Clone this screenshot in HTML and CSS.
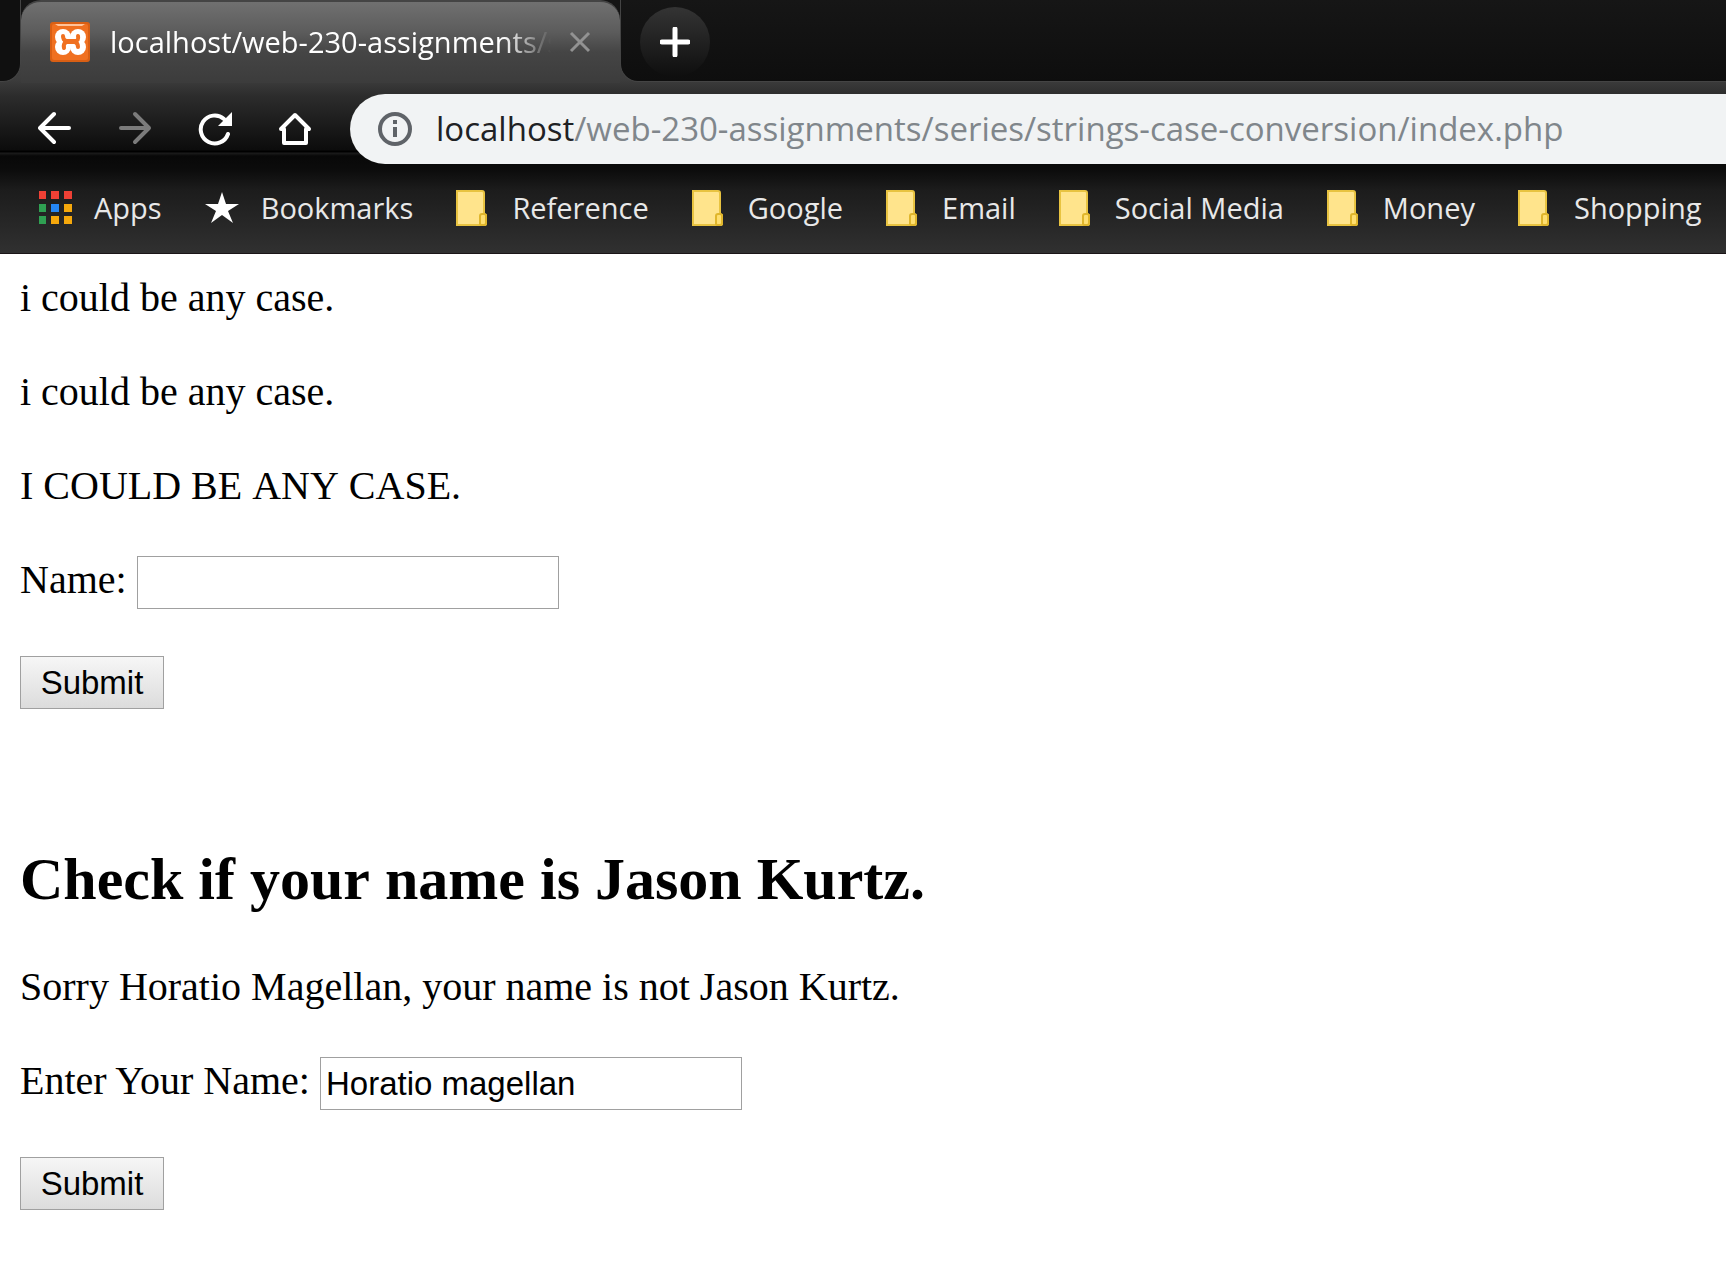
FILE: index.html
```html
<!DOCTYPE html>
<html lang="en">
<head>
<meta charset="utf-8">
<title>localhost/web-230-assignments/series/strings-case-conversion/index.php</title>
<link rel="stylesheet" href="styles.css">
</head>
<body>
<header class="chrome">
  <div class="tabstrip">
    <div class="strip-left"></div>
    <div class="tab">
      <svg class="favicon" viewBox="0 0 40 40" aria-hidden="true">
        <rect width="40" height="40" rx="3" fill="#d95f14"/>
        <rect x="2" y="2" width="36" height="36" rx="2" fill="#f07020"/>
        <path d="M5 2h30l-3 2H8z" fill="#ffc39a"/>
        <g fill="#fff"><circle cx="13" cy="15" r="8"/><circle cx="28" cy="15" r="8"/><circle cx="13" cy="25" r="8"/><circle cx="28" cy="25" r="8"/><path d="M8 16h25v8H8z"/></g>
        <path d="M13 14q0 4 3 5h9q4 0 3-5M14 26q-1-4 2-6h9q3 1 3 5" fill="none" stroke="#f07020" stroke-width="4" stroke-linecap="round"/>
      </svg>
      <span class="tab-title">localhost/web-230-assignments/s</span>
      <button class="tab-close" aria-label="Close tab"><svg width="22" height="22" viewBox="0 0 22 22"><path d="M2 2l18 18M20 2L2 20" stroke="#929292" stroke-width="3"/></svg></button>
    </div>
    <div class="strip-right">
      <button class="new-tab" aria-label="New tab"><svg width="30" height="30" viewBox="0 0 30 30"><path d="M15 2v26M2 15h26" stroke="#fff" stroke-width="5" stroke-linecap="round"/></svg></button>
    </div>
  </div>
  <nav class="toolbar" aria-label="Navigation">
    <button class="tool" aria-label="Back"><svg width="36" height="36" viewBox="0 0 36 36"><path d="M31 17H3M16 3L2 17l14 14" fill="none" stroke="#fff" stroke-width="4" stroke-linecap="round" stroke-linejoin="round"/></svg></button>
    <button class="tool" aria-label="Forward"><svg width="36" height="36" viewBox="0 0 36 36"><path d="M3 17h28M17 3l14 14-14 14" fill="none" stroke="#7b7b7b" stroke-width="4" stroke-linecap="round" stroke-linejoin="round"/></svg></button>
    <button class="tool" aria-label="Reload"><svg width="36" height="36" viewBox="0 0 36 36"><path d="M30 23A14 14 0 1 1 26 8" fill="none" stroke="#fff" stroke-width="4" stroke-linecap="round"/><path d="M34 1v14H20z" fill="#fff"/></svg></button>
    <button class="tool" aria-label="Home"><svg width="36" height="36" viewBox="0 0 36 36"><path d="M3 18L17 4l14 14h-3v14H6V18z" fill="none" stroke="#fff" stroke-width="4" stroke-linejoin="round"/></svg></button>
    <div class="omnibox">
      <svg width="34" height="34" viewBox="0 0 34 34" aria-hidden="true"><circle cx="17" cy="17" r="15" fill="none" stroke="#5f6368" stroke-width="4"/><path d="M15 15h4v10h-4zM15 8h4v4h-4z" fill="#5f6368"/></svg>
      <div class="url" role="textbox" aria-label="Address"><span class="host">localhost</span>/web-230-assignments/series/strings-case-conversion/index.php</div>
    </div>
  </nav>
  <nav class="bookmarks" aria-label="Bookmarks">
    <a class="mark" href="#"><svg class="mark-icon" viewBox="0 0 34 34"><path d="M1 0h7v8H1zM13 0h8v8h-8zM26 0h8v8h-8z" fill="#ee4035"/><path d="M1 13h7v8H1zM1 25h7v8H1z" fill="#2fa052"/><path d="M13 13h8v8h-8z" fill="#2587f5"/><path d="M26 13h8v8h-8zM13 25h8v8h-8zM26 25h8v8h-8z" fill="#f5a80c"/></svg>Apps</a>
    <a class="mark" href="#"><svg class="mark-icon" viewBox="0 0 34 34"><path d="M17 1l4 12h13L23 20l5 12-11-8-11 8 5-12L0 13h13z" fill="#fff"/></svg>Bookmarks</a>
    <a class="mark" href="#"><svg class="mark-icon"><use href="#folder"/></svg>Reference</a>
    <a class="mark" href="#"><svg class="mark-icon"><use href="#folder"/></svg>Google</a>
    <a class="mark" href="#"><svg class="mark-icon"><use href="#folder"/></svg>Email</a>
    <a class="mark" href="#"><svg class="mark-icon"><use href="#folder"/></svg>Social Media</a>
    <a class="mark" href="#"><svg class="mark-icon"><use href="#folder"/></svg>Money</a>
    <a class="mark" href="#"><svg class="mark-icon"><use href="#folder"/></svg>Shopping</a>
  </nav>
  <svg class="defs" aria-hidden="true"><symbol id="folder" viewBox="0 0 34 36"><path d="M1 1h25q2 0 2 2v21l2 1v9q0 1-2 1H1z" fill="#ffe48c" stroke="#e8c341" stroke-width="2"/><path d="M24 34v-8q0-2 2-2h2q2 0 2 2v7q0 2-2 2h-3z" fill="#ffdf70" stroke="#e0b62c" stroke-width="2"/></symbol></svg>
</header>
<main class="page">
  <p>i could be any case.</p>
  <p>i could be any case.</p>
  <p>I COULD BE ANY CASE.</p>
  <form class="form">
    <div class="field"><label for="name">Name:</label><input class="box" id="name" type="text"></div>
    <button class="submit" type="submit">Submit</button>
  </form>
  <h2>Check if your name is Jason Kurtz.</h2>
  <p>Sorry Horatio Magellan, your name is not Jason Kurtz.</p>
  <form class="form">
    <div class="field"><label for="check">Enter Your Name:</label><input class="box" id="check" type="text" value="Horatio magellan"></div>
    <button class="submit" type="submit">Submit</button>
  </form>
</main>
</body>
</html>
```
FILE: styles.css
```css
* { box-sizing: border-box; }
body { margin: 0; background: #fff; color: #000; overflow-x: hidden; }
button { font: inherit; margin: 0; padding: 0; border: 0; background: none; }
svg { display: block; flex: none; }

.chrome {
  font-family: "Open Sans", "Noto Sans", sans-serif;
  background: linear-gradient(#707070 0, #5c5c5c 30px, #454545 50px, #3c3c3c 80px, #2c2c2c 96px, #0c0c0c 150px, #000 151px, #000 152px, #1c1c1c 153px, #080808 156px, #0c0c0c 170px, #1c1c1c 190px, #303030 252px);
  border-bottom: 1px solid #1a1517;
}
.defs { display: none; }

.tabstrip { display: flex; height: 83px; background: linear-gradient(#151515 40px, transparent 40px); }
.strip-left { width: 21px; background: #101010; border: solid #444; border-width: 0 1px 1px 0; border-radius: 0 0 18px 0; height: 82px; }
.strip-right { flex: 1; height: 82px; padding: 7px 19px; background: linear-gradient(#161616, #0e0e0e); border: solid #444; border-width: 0 0 1px 1px; border-radius: 0 0 0 18px; }
.tab {
  display: flex; align-items: center; flex: 0 1 599px; min-width: 0; padding: 0 29px 2px;
  background: linear-gradient(#707070 0, #5c5c5c 30px, #454545 50px, #3c3c3c 80px);
  border-top: 2px solid #444; border-radius: 20px 20px 0 0;
}
.favicon { width: 40px; height: 40px; margin-right: 20px; }
.tab-title {
  flex: 1; overflow: hidden; white-space: nowrap; color: #fff; font-size: 29px; line-height: 40px;
  mask-image: linear-gradient(to right, #000 calc(100% - 52px), transparent calc(100% - 4px));
}
.tab-close { margin-left: 14px; }
.new-tab { display: grid; place-items: center; width: 70px; height: 70px; border-radius: 50%; background: linear-gradient(#343434, #0e0e0e); }

.toolbar { display: flex; align-items: center; gap: 44px; height: 92px; padding-left: 38px; }
.omnibox { flex: 1; display: flex; align-items: center; gap: 24px; height: 70px; margin-left: -8px; padding-left: 28px; border-radius: 35px 0 0 35px; background: #f1f3f4; }
.url { font-size: 33px; line-height: 48px; color: #80868b; white-space: nowrap; }
.host { color: #202124; }

.bookmarks { display: flex; align-items: center; gap: 43px; height: 78px; padding: 0 20px 12px 38px; }
.mark { display: flex; align-items: center; gap: 22px; color: #e8e8e8; font-size: 29px; line-height: 40px; text-decoration: none; white-space: nowrap; }
.mark-icon { width: 34px; height: 36px; }

.page { padding: 20px; font: 40px/48px "Liberation Serif", "Times New Roman", serif; }
.page p, .page h2 { font-kerning: none; }
.page p { margin: 0 0 46px; }
.page h2 { margin: 0 0 49px; font-size: 60px; line-height: 70px; }
.form { display: flex; flex-direction: column; align-items: flex-start; gap: 47px; margin-bottom: 135px; }
.form:last-child { margin-bottom: 0; }
.field { display: flex; align-items: flex-start; gap: 10px; }
.box { width: 422px; height: 53px; padding: 0 5px; border: 1px solid #a0a0a0; border-radius: 0; background: #fff; color: #000; font: 33px/40px "Liberation Sans", Arial, sans-serif; }
.submit { width: 144px; height: 53px; border: 1px solid #a0a0a0; background: linear-gradient(#f6f6f6, #dcdcdc); color: #000; font: 33px/40px "Liberation Sans", Arial, sans-serif; }
```
